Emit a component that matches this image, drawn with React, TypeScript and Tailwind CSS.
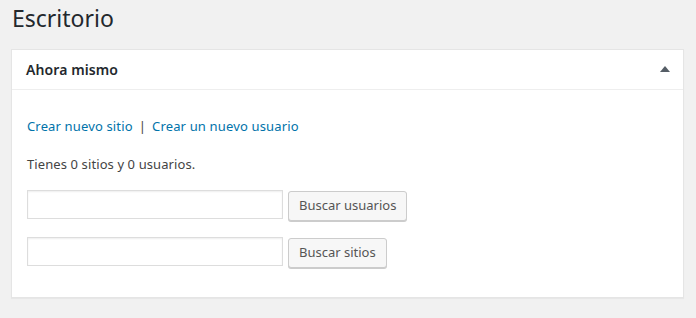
import * as React from "react";

const font = { fontFamily: '"Noto Sans", "Open Sans", sans-serif' };

const SearchRow = ({ label }: { label: string }) => (
  <div className="flex items-start gap-[5px]">
    <input
      type="text"
      className="h-[29px] w-[256px] border border-[#ddd] bg-white shadow-[inset_0_1px_2px_rgba(0,0,0,0.07)] outline-none"
    />
    <button className="mt-px h-[30px] rounded-[3px] border border-[#ccc] bg-[#f7f7f7] px-[10px] pb-px text-[13px] text-[#555] shadow-[0_1px_0_#ccc]">
      {label}
    </button>
  </div>
);

export default function App() {
  return (
    <div
      className="min-h-[318px] bg-[#f1f1f1] pl-[11px] pr-[12px] pt-[4px] text-[13px] text-[#444]"
      style={font}
    >
      <h1 className="pl-px text-[23px] leading-[29px] font-normal text-[#23282d]">
        Escritorio
      </h1>
      <div className="mt-[16px] border border-[#e5e5e5] bg-white shadow-[0_1px_1px_rgba(0,0,0,0.04)]">
        <div className="flex h-[40px] items-center justify-between border-b border-[#eee] pl-[14px] pr-[13px]">
          <h2 className="text-[14px] font-semibold tracking-[0.1px] text-[#23282d]">
            Ahora mismo
          </h2>
          <svg width="10" height="6" viewBox="0 0 10 6" className="mt-[-2px]">
            <path d="M5 0 L10 6 L0 6 Z" fill="#555d66" />
          </svg>
        </div>
        <div className="pl-[15px] pb-[29px]">
          <p className="mt-[27px] leading-[18px] tracking-[0.15px]">
            <a className="text-[#0073aa]" href="#">
              Crear nuevo sitio
            </a>
            <span className="mx-[6px]">|</span>
            <a className="text-[#0073aa]" href="#">
              Crear un nuevo usuario
            </a>
          </p>
          <p className="mt-[20px] leading-[18px] tracking-[0.1px]">
            Tienes 0 sitios y 0 usuarios.
          </p>
          <div className="mt-[17px] flex flex-col gap-[16px]">
            <SearchRow label="Buscar usuarios" />
            <SearchRow label="Buscar sitios" />
          </div>
        </div>
      </div>
    </div>
  );
}
